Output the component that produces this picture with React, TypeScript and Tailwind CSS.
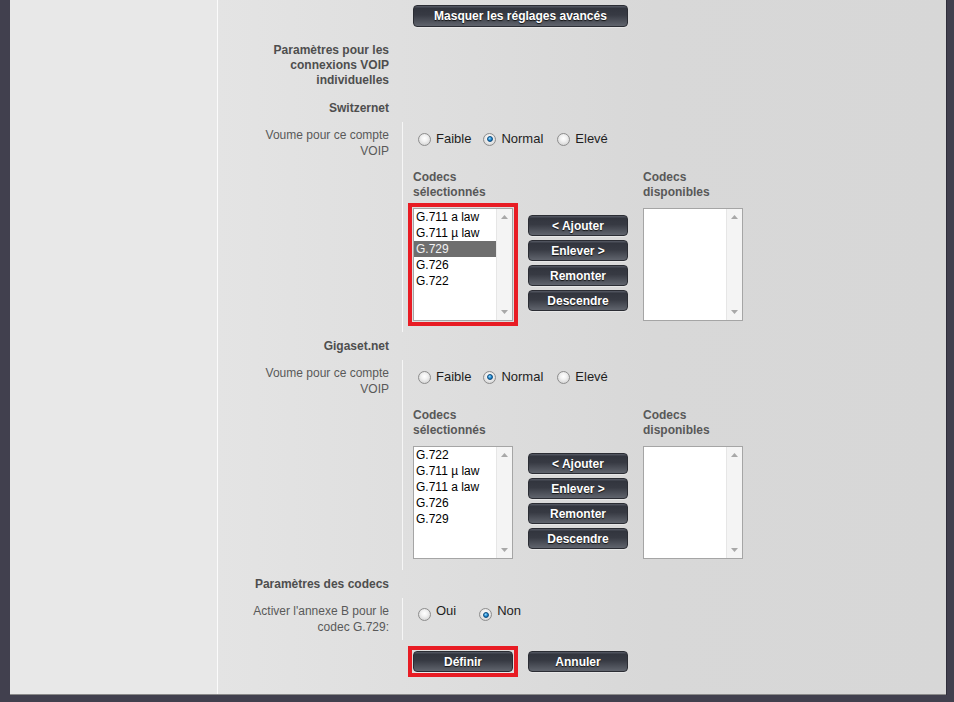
import React from "react";

const FONT = "font-['Liberation_Sans',Arial,Helvetica,sans-serif]";
const RING = "outline-[4px] outline-solid outline-[#e81c24] outline-offset-[1px]";

function Btn({ children, w = "w-[100px]", h = "h-[21px]", ring = false }: { children: React.ReactNode; w?: string; h?: string; ring?: boolean }) {
  return (
    <div className={`${w} ${h} ${ring ? RING : ""}`}>
      <div className="w-full h-full flex items-center justify-center rounded-[4px] border border-[#2b2d34] bg-[linear-gradient(to_bottom,#585c67_0%,#32353e_12%,#373a43_45%,#60646d_100%)] text-[12px] font-bold text-white [text-shadow:0_1px_1px_#111] shadow-[0_1px_0_rgba(255,255,255,0.35)]">
        {children}
      </div>
    </div>
  );
}

function Radio({ checked = false }: { checked?: boolean }) {
  return (
    <span className="relative inline-block w-[13px] h-[13px] shrink-0 rounded-full border border-[#8d8d8d] bg-[radial-gradient(circle_at_50%_40%,#ffffff_0%,#f2f2f2_35%,#c9c9c9_100%)]">
      {checked && (
        <span className="absolute left-[2.5px] top-[2.5px] w-[6px] h-[6px] rounded-full border border-[#0b4a7c] bg-[radial-gradient(circle_at_40%_35%,#9adcff_0%,#1c86cf_55%,#0e5a96_100%)]" />
      )}
    </span>
  );
}

function Listbox({ items, selected = -1, ring = false }: { items: string[]; selected?: number; ring?: boolean }) {
  return (
    <div className={`w-[100px] h-[113px] flex bg-white border border-[#a5a5a5] ${ring ? RING : ""}`}>
      <div className="flex-1 flex flex-col">
        {items.map((it, i) => (
          <div
            key={it}
            className={`h-[16px] leading-[16px] pl-[2px] text-[12px] ${
              i === selected ? "bg-[#6e6e6e] text-[#f2f2f2]" : "text-black"
            }`}
          >
            {it}
          </div>
        ))}
      </div>
      <div className="w-[16px] flex flex-col justify-between items-center bg-[#f4f4f4] border-l border-[#e6e6e6] pt-[6px] pb-[6px]">
        <svg width="7" height="4" viewBox="0 0 7 4">
          <path d="M0 4 L3.5 0 L7 4 Z" fill="#a8a8a8" />
        </svg>
        <svg width="7" height="4" viewBox="0 0 7 4">
          <path d="M0 0 L3.5 4 L7 0 Z" fill="#a8a8a8" />
        </svg>
      </div>
    </div>
  );
}

function VoipRow({ items, selected, ring }: { items: string[]; selected?: number; ring?: boolean }) {
  return (
    <div className="flex h-[210px]">
      <div className="w-[184px] pr-[13px] pt-[5px] flex justify-end">
        <div className="w-[140px] text-right text-[12px] leading-[16px] text-[#595959]">
          Voume pour ce compte
          <br />
          VOIP
        </div>
      </div>
      <div className="border-l border-[#f6f6f6] pl-[10px]">
        <div className="mt-[9px] h-[16px] flex items-center pl-[5px] text-[13px] text-[#1e1e1e]">
          <Radio />
          <span className="ml-[5px] mr-[12px]">Faible</span>
          <Radio checked />
          <span className="ml-[5px] mr-[14px]">Normal</span>
          <Radio />
          <span className="ml-[5px]">Elevé</span>
        </div>
        <div className="mt-[23px] flex">
          <div className="w-[100px]">
            <div className="h-[30px] text-[12px] leading-[15px] font-bold text-[#585858]">
              Codecs
              <br />
              sélectionnés
            </div>
            <div className="mt-[8px]">
              <Listbox items={items} selected={selected} ring={ring} />
            </div>
          </div>
          <div className="ml-[15px] pt-[45px] flex flex-col gap-[4px]">
            <Btn>&lt; Ajouter</Btn>
            <Btn>Enlever &gt;</Btn>
            <Btn>Remonter</Btn>
            <Btn>Descendre</Btn>
          </div>
          <div className="ml-[15px] w-[100px]">
            <div className="h-[30px] text-[12px] leading-[15px] font-bold text-[#585858]">
              Codecs
              <br />
              disponibles
            </div>
            <div className="mt-[8px]">
              <Listbox items={[]} />
            </div>
          </div>
        </div>
      </div>
    </div>
  );
}

function Heading({ children, pt, pb }: { children: React.ReactNode; pt: string; pb: string }) {
  return (
    <div className={`w-[184px] pr-[13px] flex justify-end ${pt} ${pb}`}>
      <div className="w-[150px] text-right text-[12px] leading-[15px] font-bold text-[#4e4e4e]">{children}</div>
    </div>
  );
}

export default function App() {
  return (
    <div className={`w-[954px] h-[702px] bg-[#41404e] pl-[10px] pr-[8px] ${FONT}`}>
      <div className="h-[695px] flex border-b border-[#8a8a8a] shadow-[1px_0_0_#2f2e3a]">
        <div className="w-[208px] shrink-0 bg-[#e8e8e8] border-r border-[#fbfbfb]" />
        <div className="flex-1 bg-[linear-gradient(to_right,#e4e4e4_0%,#d8d8d8_60%,#d7d7d7_100%)] pt-[5px]">
          <div className="pl-[195px]">
            <Btn w="w-[215px]" h="h-[22px]">
              Masquer les réglages avancés
            </Btn>
          </div>
          <Heading pt="pt-[16px]" pb="pb-0">
            Paramètres pour les
            <br />
            connexions VOIP
            <br />
            individuelles
          </Heading>
          <Heading pt="pt-[12.5px]" pb="pb-[6.5px]">
            Switzernet
          </Heading>
          <VoipRow items={["G.711 a law", "G.711 µ law", "G.729", "G.726", "G.722"]} selected={2} ring />
          <Heading pt="pt-[6.5px]" pb="pb-[6.5px]">
            Gigaset.net
          </Heading>
          <VoipRow items={["G.722", "G.711 µ law", "G.711 a law", "G.726", "G.729"]} />
          <Heading pt="pt-[6.5px]" pb="pb-[6.5px]">
            Paramètres des codecs
          </Heading>
          <div className="flex h-[42px]">
            <div className="w-[184px] pr-[13px] pt-[5px] flex justify-end">
              <div className="w-[140px] text-right text-[12px] leading-[16px] text-[#595959]">
                Activer l'annexe B pour le
                <br />
                codec G.729:
              </div>
            </div>
            <div className="border-l border-[#f6f6f6] pl-[15px] pt-[5px]">
              <div className="flex items-start text-[13px] leading-[16px] text-[#1e1e1e]">
                <span className="mt-[5px]">
                  <Radio />
                </span>
                <span className="ml-[5px] mr-[23px]">Oui</span>
                <span className="mt-[5px]">
                  <Radio checked />
                </span>
                <span className="ml-[5px]">Non</span>
              </div>
            </div>
          </div>
          <div className="pl-[195px] mt-[11px] flex gap-[15px]">
            <Btn ring>Définir</Btn>
            <Btn>Annuler</Btn>
          </div>
        </div>
      </div>
    </div>
  );
}
